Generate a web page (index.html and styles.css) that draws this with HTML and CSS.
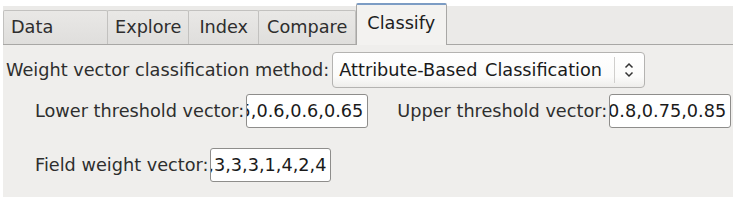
FILE: index.html
```html
<!DOCTYPE html>
<html lang="en">
<head>
  <meta charset="UTF-8">
  <title>Classify</title>
  <link rel="stylesheet" href="styles.css">
</head>
<body>
  <div class="window">
    <!-- tab strip -->
    <div class="tabs">
      <div class="tab tab-wide">Data</div>
      <div class="tab">Explore</div>
      <div class="tab tab-index">Index</div>
      <div class="tab tab-compare">Compare</div>
      <div class="tab active">Classify</div>
    </div>

    <div class="panel">
      <div class="row">
        <span class="label">Weight vector classification method:</span>
        <div class="combo">
          <span class="combo-text">Attribute-Based Classification</span>
          <span class="combo-sep"></span>
          <svg class="combo-arrows" width="10" height="20" viewBox="0 0 10 20">
            <path d="M1.5 7.5 L5 4 L8.5 7.5" fill="none" stroke="#333" stroke-width="1.5"/>
            <path d="M1.5 12.5 L5 16 L8.5 12.5" fill="none" stroke="#333" stroke-width="1.5"/>
          </svg>
        </div>
      </div>

      <div class="row indent">
        <span class="label">Lower threshold vector:</span>
        <div class="entry"><span>0.5,0.6,0.6,0.65</span></div>
        <span class="label upper">Upper threshold vector:</span>
        <div class="entry"><span>0.8,0.75,0.85</span></div>
      </div>

      <div class="row indent last">
        <span class="label">Field weight vector:</span>
        <div class="entry short"><span>3,3,3,3,1,4,2,4</span></div>
      </div>
    </div>
  </div>
</body>
</html>
```

FILE: styles.css
```css
body {
  margin: 0;
  background: #ffffff;
  font-family: "DejaVu Sans", sans-serif;
  font-size: 17.7px;
  color: #2e2e2e;
}

.window {
  margin: 6px 3px 0 3px;
  width: 730px;
  background: #efeeec;
}

.tabs {
  display: flex;
  align-items: flex-end;
  height: 38px;
  background: #ebeae8;
  border-bottom: 1px solid #a8a7a5;
}

.tab {
  height: 33px;
  line-height: 33px;
  padding: 0 7px;
  background: linear-gradient(#e9e8e6, #dfdedc);
  border: 1px solid #c2c1bf;
  border-bottom: none;
  border-radius: 2px 2px 0 0;
  margin-right: -1px;
  color: #2e2e2e;
}

.tab-wide {
  width: 89px;
}

.tab-index {
  padding: 0 10px;
}

.tab-compare {
  padding: 0 8px;
}

.tab.active {
  height: 40px;
  line-height: 37px;
  margin-bottom: -1px;
  margin-left: 1px;
  padding: 0 11px 0 10px;
  background: #f3f2f0;
  border-color: #a8a7a5;
  border-top: 2px solid #7c9cc4;
  color: #1e1e1e;
}

.panel {
  padding: 6px 0 14px 3px;
}

.row {
  display: flex;
  align-items: center;
  height: 37px;
}

.row.indent {
  padding-left: 29px;
  margin-top: 4px;
}

.row.last {
  margin-top: 17px;
}

.label {
  white-space: nowrap;
}

.upper {
  margin-left: 29px;
}

.combo {
  display: flex;
  align-items: center;
  margin-left: 3px;
  width: 313px;
  height: 36px;
  border: 1px solid #b4b3b1;
  border-radius: 4px;
  background: linear-gradient(#ffffff, #fbfbfa 70%, #eeedeb);
  box-sizing: border-box;
}

.combo-text {
  flex: 1;
  padding-left: 6px;
  color: #1a1a1a;
  white-space: nowrap;
  overflow: hidden;
  word-spacing: 2px;
}

.combo-sep {
  width: 1px;
  height: 26px;
  background: #d0cfcd;
  margin-right: 9px;
}

.combo-arrows {
  margin-right: 10px;
}

.entry {
  display: flex;
  justify-content: flex-end;
  width: 122px;
  height: 34px;
  line-height: 32px;
  box-sizing: border-box;
  border: 1px solid #8e8d8b;
  border-radius: 3px;
  background: #ffffff;
  overflow: hidden;
  padding-right: 4px;
  color: #1a1a1a;
  margin-left: 2px;
}

.entry span {
  white-space: nowrap;
}

.short {
  width: 121px;
}
```
